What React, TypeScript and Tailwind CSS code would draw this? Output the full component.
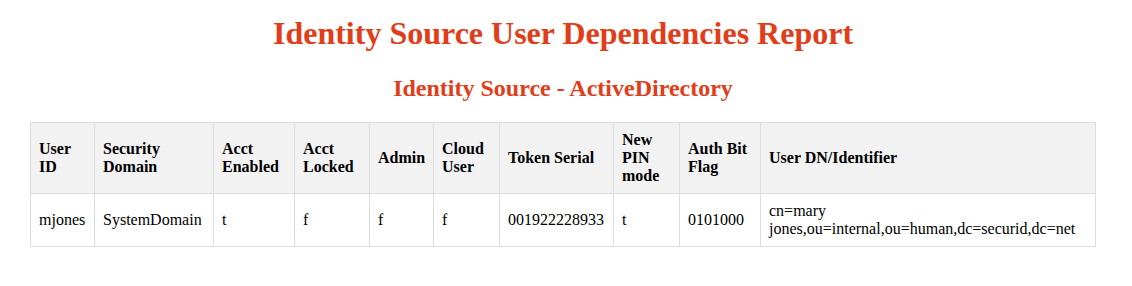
import React from "react";

const columns = [
  { label: "User ID", width: "w-[64px]" },
  { label: "Security Domain", width: "w-[119px]" },
  { label: "Acct Enabled", width: "w-[81px]" },
  { label: "Acct Locked", width: "w-[75px]" },
  { label: "Admin", width: "w-[64px]" },
  { label: "Cloud User", width: "w-[66px]" },
  { label: "Token Serial", width: "w-[114px]" },
  { label: "New PIN mode", width: "w-[66px]" },
  { label: "Auth Bit Flag", width: "w-[81px]" },
  { label: "User DN/Identifier", width: "w-[335px]" },
];

const rows = [
  [
    "mjones",
    "SystemDomain",
    "t",
    "f",
    "f",
    "f",
    "001922228933",
    "t",
    "0101000",
    "cn=mary jones,ou=internal,ou=human,dc=securid,dc=net",
  ],
];

function App() {
  return (
    <div className="bg-white min-h-[286px] text-black font-['Liberation_Serif',_'Times_New_Roman',_serif] pt-[15px] pr-[6px]">
      <h1 className="text-center text-[32px] leading-[37px] font-bold text-[#e03e1a]">
        Identity Source User Dependencies Report
      </h1>
      <h2 className="mt-[22px] text-center text-[24px] leading-[28px] font-bold text-[#e03e1a]">
        Identity Source - ActiveDirectory
      </h2>
      <table className="mt-[20px] ml-[30px] w-[1066px] table-fixed border-collapse text-[16px] leading-[normal]">
        <colgroup>
          {columns.map((c) => (
            <col key={c.label} className={c.width} />
          ))}
        </colgroup>
        <thead>
          <tr className="bg-[#f2f2f2]">
            {columns.map((c) => (
              <th
                key={c.label}
                className="border border-[#dddddd] p-2 text-left align-middle font-bold"
              >
                {c.label}
              </th>
            ))}
          </tr>
        </thead>
        <tbody>
          {rows.map((r, i) => (
            <tr key={i}>
              {r.map((cell, j) => (
                <td
                  key={j}
                  className="border border-[#dddddd] p-2 text-left align-middle"
                >
                  {cell}
                </td>
              ))}
            </tr>
          ))}
        </tbody>
      </table>
    </div>
  );
}

export default App;
